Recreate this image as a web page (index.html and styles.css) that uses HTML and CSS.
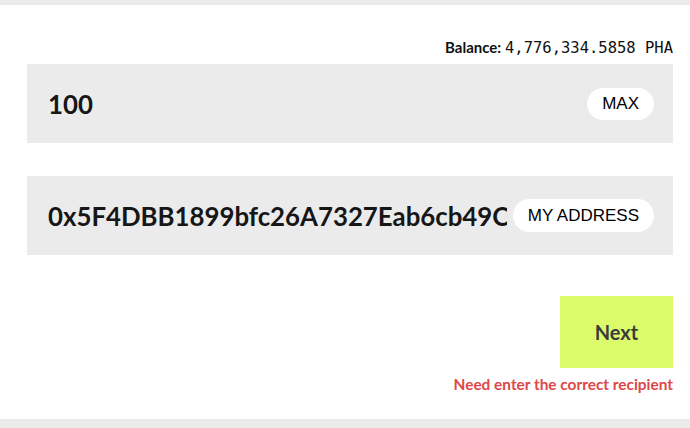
FILE: index.html
```html
<!DOCTYPE html>
<html>
<head>
<meta charset="utf-8">
<link rel="stylesheet" href="styles.css">
</head>
<body>
<div class="band"></div>
<main class="panel">
  <div class="balance"><span class="label">Balance:</span> <span class="num">4,776,334.5858 PHA</span></div>
  <div class="field">
    <div class="value">100</div>
    <button class="pill">MAX</button>
  </div>
  <div class="field field2">
    <div class="value">0x5F4DBB1899bfc26A7327Eab6cb49C7E1bDAB2C4a</div>
    <button class="pill">MY ADDRESS</button>
  </div>
  <div class="actions">
    <button class="next">Next</button>
    <div class="error">Need enter the correct recipient</div>
  </div>
</main>
<div class="band bottom"></div>
</body>
</html>
```
FILE: styles.css
```css
html, body {
  margin: 0;
  padding: 0;
  background: #fff;
  height: 428px;
  overflow: hidden;
}
body {
  font-family: Lato, "Noto Sans", sans-serif;
  display: flex;
  flex-direction: column;
}
.band {
  height: 5px;
  background: #ebebeb;
  flex: none;
}
.band.bottom {
  height: 9px;
}
.panel {
  flex: 1;
  padding: 0 17px 0 27px;
  display: flex;
  flex-direction: column;
}
.balance {
  margin-top: 32px;
  height: 27px;
  text-align: right;
  font-size: 15px;
  color: #111;
  line-height: 20px;
}
.balance .label {
  font-weight: 700;
}
.balance .num {
  font-family: "DejaVu Sans Mono", monospace;
  font-size: 15.5px;
}
.field {
  height: 79px;
  background: #ebebeb;
  display: flex;
  align-items: center;
  padding: 0 19px 0 21px;
  gap: 6px;
}
.field2 {
  margin-top: 33px;
}
.value {
  flex: 1;
  min-width: 0;
  overflow: hidden;
  white-space: nowrap;
  font-size: 25.8px;
  font-weight: 700;
  color: #161616;
}
.pill {
  flex: none;
  border: none;
  background: #fff;
  border-radius: 17px;
  height: 32px;
  padding: 0 15px;
  font-family: "Liberation Sans", Arial, sans-serif;
  font-size: 17px;
  color: #000;
}
.field2 .pill {
  height: 33px;
}
.actions {
  margin-top: 41px;
  display: flex;
  flex-direction: column;
  align-items: flex-end;
}
.next {
  width: 113px;
  height: 72px;
  border: none;
  background: #dcfb6b;
  font-family: Lato, sans-serif;
  font-weight: 700;
  font-size: 20px;
  color: #3b3b3b;
}
.error {
  margin-top: 7px;
  font-size: 15.4px;
  font-weight: 700;
  color: #e0474a;
}
```
